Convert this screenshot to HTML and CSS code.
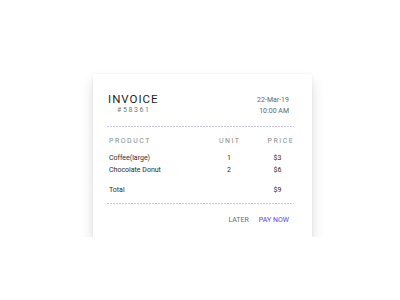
FILE: index.html
```html
<!DOCTYPE html>
<html lang="en">
<head>
    <meta charset="UTF-8">
    <title>Invoice</title>
    <link rel="stylesheet" href="styles.css">
</head>
<body>
    <div class="invoice-card">
        <header class="invoice-header">
            <div class="invoice-title">
                <h1>INVOICE</h1>
                <span class="invoice-number">#58361</span>
            </div>
            <div class="invoice-date">
                <span>22-Mar-19</span>
                <span>10:00 AM</span>
            </div>
        </header>
        <div class="divider"></div>
        <div class="invoice-table">
            <div class="row head">
                <span>PRODUCT</span>
                <span class="col-unit">UNIT</span>
                <span class="col-price">PRICE</span>
            </div>
            <div class="row item">
                <span>Coffee(large)</span>
                <span class="col-unit">1</span>
                <span class="col-price">$3</span>
            </div>
            <div class="row item">
                <span>Chocolate Donut</span>
                <span class="col-unit">2</span>
                <span class="col-price">$6</span>
            </div>
            <div class="row total">
                <span>Total</span>
                <span class="col-unit"></span>
                <span class="col-price">$9</span>
            </div>
        </div>
        <div class="divider"></div>
        <div class="invoice-actions">
            <button class="btn btn-later">LATER</button>
            <button class="btn btn-pay">PAY NOW</button>
        </div>
    </div>
</body>
</html>
```

FILE: styles.css
```css
:root {
    --font-body: Roboto, "Liberation Sans", sans-serif;
    --color-bg: #ffffff;
    --color-text: #2b2b2b;
    --color-muted: #777777;
    --color-line: #cfc6ee;
    --color-primary: #5a3fd8;
}
body {
    font-family: var(--font-body);
    background-color: var(--color-bg);
    color: var(--color-text);
    margin: 0;
    padding: 74px 0 0 93px;
}

.invoice-card {
    width: 219px;
    height: 163px;
    box-sizing: border-box;
    padding: 18px 18px 0 14px;
    background: #ffffff;
    box-shadow: 0 8px 12px rgba(0,0,0,0.15), 0 0 3px rgba(0,0,0,0.06);
}

/* ヘッダー */
.invoice-header {
    display: flex;
    justify-content: space-between;
    align-items: flex-start;
    padding: 0 5px 0 1px;
}
.invoice-title h1 {
    margin: 0;
    font-size: 11.5px;
    line-height: 14px;
    font-weight: 400;
    letter-spacing: 1px;
    color: #1e1e1e;
}
.invoice-number {
    display: block;
    margin: 0 0 0 9px;
    font-size: 7px;
    line-height: 9px;
    letter-spacing: 1.6px;
    color: var(--color-muted);
}
.invoice-date {
    display: flex;
    flex-direction: column;
    align-items: flex-end;
    padding-top: 3px;
    font-size: 7px;
    line-height: 11px;
    color: #666666;
}

.divider {
    height: 1px;
    background: repeating-linear-gradient(to right, var(--color-line) 0 2px, transparent 2px 3px);
}
.invoice-header + .divider { margin-top: 9px; }

/* テーブル */
.invoice-table {
    padding: 8px 5px 7px 2px;
}
.row {
    display: grid;
    grid-template-columns: 1fr 30px 23px;
    column-gap: 22px;
    align-items: center;
    font-size: 7px;
}
.col-unit, .col-price { text-align: center; }
.row.head {
    height: 11px;
    letter-spacing: 1.5px;
    color: #8a8a8a;
    margin-bottom: 6px;
}
.row.head .col-unit, .row.head .col-price { text-indent: 1.5px; }
.row.item {
    height: 12px;
    color: var(--color-text);
}
.row.total {
    height: 12px;
    margin-top: 8px;
    color: var(--color-text);
}

.invoice-actions {
    display: flex;
    justify-content: flex-end;
    gap: 10px;
    padding: 11px 5px 0 0;
}
.btn {
    border: none;
    background: none;
    padding: 0;
    font-family: var(--font-body);
    font-size: 7px;
    line-height: 10px;
    cursor: pointer;
}
.btn-later { color: #6b6b6b; }
.btn-pay { color: var(--color-primary); }
```
